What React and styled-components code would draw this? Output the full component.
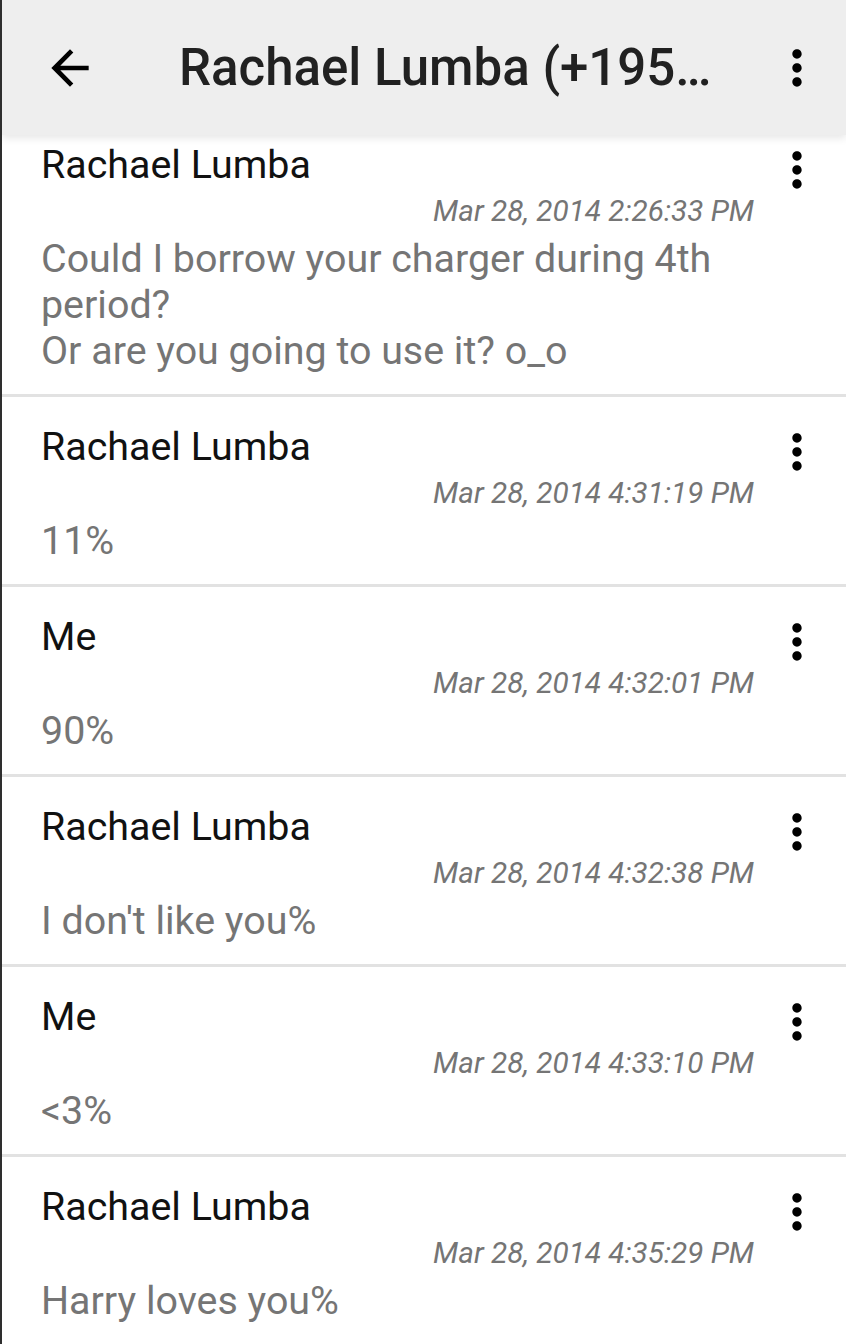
import styled, { createGlobalStyle } from "styled-components";

const GlobalStyle = createGlobalStyle`
  html, body {
    margin: 0;
    padding: 0;
    background: #ffffff;
  }
  body {
    font-family: Roboto, "Noto Sans", "Liberation Sans", sans-serif;
  }
`;

const messages = [
  {
    id: 1,
    from: "Rachael Lumba",
    time: "Mar 28, 2014 2:26:33 PM",
    text: "Could I borrow your charger during 4th period?\nOr are you going to use it? o_o",
  },
  { id: 2, from: "Rachael Lumba", time: "Mar 28, 2014 4:31:19 PM", text: "11%" },
  { id: 3, from: "Me", time: "Mar 28, 2014 4:32:01 PM", text: "90%" },
  { id: 4, from: "Rachael Lumba", time: "Mar 28, 2014 4:32:38 PM", text: "I don't like you%" },
  { id: 5, from: "Me", time: "Mar 28, 2014 4:33:10 PM", text: "<3%" },
  { id: 6, from: "Rachael Lumba", time: "Mar 28, 2014 4:35:29 PM", text: "Harry loves you%" },
];

function BackIcon() {
  return (
    <svg width="56" height="56" viewBox="0 0 24 24">
      <path fill="#000" d="M20 11H7.83l5.59-5.59L12 4l-8 8 8 8 1.41-1.41L7.83 13H20v-2z" />
    </svg>
  );
}

function MoreIcon() {
  return (
    <svg width="56" height="56" viewBox="0 0 24 24">
      <path
        fill="#000"
        d="M12 8c1.1 0 2-.9 2-2s-.9-2-2-2-2 .9-2 2 .9 2 2 2zm0 2c-1.1 0-2 .9-2 2s.9 2 2 2 2-.9 2-2-.9-2-2-2zm0 6c-1.1 0-2 .9-2 2s.9 2 2 2 2-.9 2-2-.9-2-2-2z"
      />
    </svg>
  );
}

function App() {
  return (
    <>
      <GlobalStyle />
      <Screen>
        <AppBar>
          <IconButton>
            <BackIcon />
          </IconButton>
          <Title>Rachael Lumba (+195…</Title>
          <IconButton>
            <MoreIcon />
          </IconButton>
        </AppBar>
        <List>
          {messages.map((m) => (
            <Item key={m.id}>
              <Content>
                <Sender>{m.from}</Sender>
                <Time>{m.time}</Time>
                <Body>{m.text}</Body>
              </Content>
              <ItemMenu>
                <MoreIcon />
              </ItemMenu>
            </Item>
          ))}
        </List>
      </Screen>
    </>
  );
}

const Screen = styled.div`
  height: 100vh;
  overflow: hidden;
  border-left: 2px solid #2e2e2e;
  background: #ffffff;
  display: flex;
  flex-direction: column;
`;

const AppBar = styled.header`
  position: relative;
  z-index: 1;
  flex-shrink: 0;
  height: 135px;
  display: flex;
  align-items: center;
  padding: 0 21px 0 40px;
  background: #eeeeee;
  box-shadow: 0 3px 8px rgba(0, 0, 0, 0.1);
`;

const IconButton = styled.div`
  width: 56px;
  height: 56px;
  flex-shrink: 0;
  display: flex;
`;

const Title = styled.h1`
  flex: 1;
  margin: 0 0 0 81px;
  font-size: 51px;
  font-weight: 500;
  color: #212121;
  white-space: nowrap;
  overflow: hidden;
`;

const List = styled.div`
  margin-top: -20px;
`;

const Item = styled.div`
  display: flex;
  align-items: flex-start;
  padding: 27px 21px 20px 39px;
  border-bottom: 3px solid #e2e2e2;
`;

const Content = styled.div`
  flex: 1;
  display: flex;
  flex-direction: column;
  margin-right: 15px;
`;

const Sender = styled.div`
  font-size: 39.4px;
  line-height: 46px;
  color: #111111;
`;

const Time = styled.div`
  margin-top: 6px;
  font-size: 29.7px;
  line-height: 34px;
  font-style: italic;
  color: #757575;
  text-align: right;
`;

const Body = styled.div`
  margin-top: 8px;
  font-size: 39.4px;
  line-height: 46px;
  color: #757575;
  white-space: pre-line;
`;

const ItemMenu = styled.div`
  width: 56px;
  height: 56px;
  flex-shrink: 0;
`;

export default App;
